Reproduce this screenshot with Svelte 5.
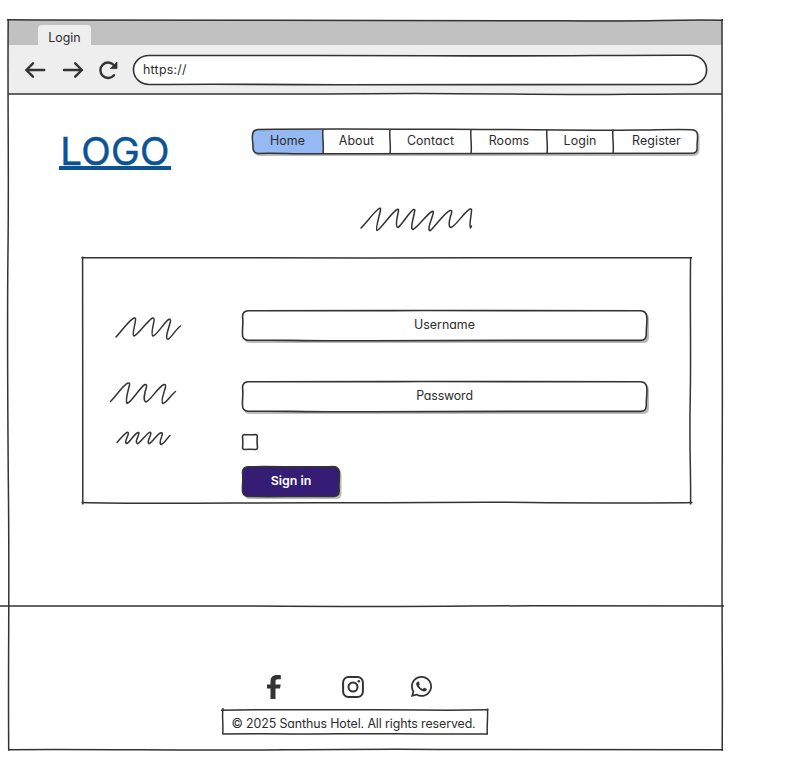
<script>
  const links = [
    { label: 'Home', width: 71, active: true },
    { label: 'About', width: 67 },
    { label: 'Contact', width: 81 },
    { label: 'Rooms', width: 76 },
    { label: 'Login', width: 66 },
    { label: 'Register', width: 87 }
  ];
  const dividers = [323, 390, 471, 547, 613];
</script>

{#snippet field(label)}
  <div class="field stack">
    <svg viewBox="0 0 405 31" width="405" height="31">
      <path class="shadow" d="M8 2.5H401Q407 3 407 9V27Q407 33 401 33H8Q2 33 2 27V9Q2 3 8 2.5Z" />
      <path class="box" d="M6 .7C90 .2 130 1 180 .5S300 1 398.500 .8Q404.500 1 404.800 7C405.300 13 404 19 404.300 25Q404 30.300 398.500 30.400C300 29.800 230 30.700 130 30.800S60 29.800 6 30.300Q.5 30 .5 24.500C.2 18 1.500 12 .5 6.500Q.7 1 6 .7Z" />
    </svg>
    <span>{label}</span>
  </div>
{/snippet}

<div class="page">
  <div class="window">
    <div class="tabs"><div class="tab">Login</div></div>
    <div class="toolbar">
      <svg class="controls" viewBox="17 50 110 40" width="110" height="40">
        <g fill="none" stroke="#333" stroke-width="2.400" stroke-linecap="round" stroke-linejoin="round">
          <path d="M44.200 70H26.300M33 63.300L26.300 70L33 76.700" />
          <path d="M64 70H81.900M75.200 63.300L81.900 70L75.200 76.700" />
          <path d="M114 65.300A7.700 7.700 0 1 0 114 75.200" />
        </g>
        <path fill="#333" stroke="#333" stroke-width=".8" stroke-linejoin="round" d="M117 62V68.600H110.400Z" />
      </svg>
      <div class="address stack">
        <svg viewBox="134 55 573 30" width="573" height="30">
          <path class="box" d="M149 55.500C260 56 330 55 430 55.700S620 55 690 55.200C699 55 706.600 61 706.600 70S699 84.500 691 84.500C570 84 450 85 340 84.800S250 83.800 149 84.500C140 84.300 133.800 78 133.500 70S140 55.700 149 55.500Z" />
        </svg>
        <span>https://</span>
      </div>
    </div>

    <header>
      <div class="logo">LOGO</div>
      <nav class="stack">
        <svg viewBox="252 129 446 25" width="446" height="25">
          <path class="shadow" d="M260 131H694Q699.500 131 699.500 137V150Q699.500 156 693 156H260Q254 156 254 150V137Z" />
          <path fill="#fff" d="M258 129H692Q697.500 129.500 697.500 135V148Q697.500 153.500 692 153.500H258Q252.500 153 252.500 148V135Q252.500 129.500 258 129Z" />
          <path fill="#95b9f2" d="M323 129.500H258Q252.500 130 252.500 135V148Q253 153.500 258 153.500H323Z" />
          <path class="line" d="M258 129.400C330 128.600 390 129.200 450 129.300S610 130.700 640 130.100S675 129.300 692 129.700Q697.300 130.200 697.500 135C697.900 140 696.600 144 697.200 148Q697 153.300 692 153.300C570 154 450 153 360 153.700S300 153 258 153.400Q253.200 153 253 148C253.300 143 251.700 139 252.500 135Q252.700 129.800 258 129.400Z" />
          {#each dividers as x}
            <path class="line" d="M{x} 129.500C{x - 1} 137 {x + 1.2} 145 {x} 153.500" />
          {/each}
        </svg>
        <div class="links">
          {#each links as link}
            <span style="width:{link.width}px" class:active={link.active}>{link.label}</span>
          {/each}
        </div>
      </nav>
    </header>

    <svg class="title" viewBox="360 207 114 25" width="114" height="25">
      <path class="scribble" d="M361 228C367 222 374 212 379 208.500Q381 207.500 380.500 210C379 218 375 229 377 230.500C380 230 392 212 397 209.500Q399 208.500 398.500 211C397 218 395 227 398 227.500C401 226 410 211 413.500 209.500Q415.500 209 414.500 212C413 220 410 229 413 229.500C417 228 427 214 432 211.500Q434 210.500 433 214C431 221 427 230 430 230.800C433 229 445 212 450 210.500Q452.500 210 451.500 213C449 221 448 227 451 227.500C456 226 464 212 470 209Q472 208.500 471.500 211C471 217 469 226 470.500 228L471.500 226" />
    </svg>

    <section class="card">
      <svg class="outline" viewBox="82 257 609 246" width="609" height="246">
        <g class="line">
          <path d="M81.500 257.800C180 257 260 258.500 370 258S550 258.400 692 257.800" />
          <path d="M82.600 256.500C83 340 82 430 82.800 504.500" />
          <path d="M690.600 257C689.800 310 691.200 350 690.200 400S691 470 690.600 504.500" />
          <path d="M81.500 502.500C150 504.300 240 502.500 330 502.700S470 501.800 530 502.500S620 503 692.500 502.600" />
        </g>
      </svg>
      <div class="form">
        <div class="row first">
          <svg viewBox="110 317 76 24" width="76" height="24">
            <path class="scribble" d="M116 337C122 331 129 320 134 318Q136 317.500 135.500 320C135 326 131.500 335 134 336C138 335 147 321 152.500 318Q154.500 317.500 154 321C153 327 150.500 335 153 336C158 334 165 321 169 319.300Q171.500 319 170 323C168.500 329 164.500 339 168 339.300C172 337 176 329 180.500 326" />
          </svg>
          {@render field('Username')}
        </div>
        <div class="row second">
          <svg viewBox="110 381 76 24" width="76" height="24">
            <path class="scribble" d="M110.500 401.500C117 395 123 385 128 383Q130 382.500 129.500 385C128 391 125 401 127 403.500C131 403 140 387 145 384.500Q147 384 146.500 387C144.500 393 143 401 146 402C151 400 158 387 164 384.500Q166 384 165.500 387C164 393 160 402 163 403.500C167 402 171 395 175.500 391.500" />
          </svg>
          {@render field('Password')}
        </div>
        <div class="row third">
          <svg viewBox="110 431 76 16" width="76" height="16">
            <path class="scribble" d="M117 442.500C121 438 124 434 127 432.300Q129 432 128 435C127 438 124 443 127 443.500C130 442 134 434 138 432.500Q139.500 432 138.500 435C137 439 135 443 137.500 443.700C141 442 146 434 149.500 432.300Q151.500 432 150.500 435C149 439 147 443 149 443.700C153 442 157 434 161 432.800Q163 432.500 162 435.500C160.500 440 159 444 161.500 444.500C165 443 167 438 170 435.500" />
          </svg>
          <svg class="check" viewBox="0 0 16 16" width="16" height="16">
            <path class="box" d="M2.500 .5Q8 .9 13.500 .5Q15.300 .6 15.300 2.500Q14.800 8 15.500 13.500Q15.300 15.500 13.500 15.500Q8 15 2.500 15.500Q.7 15.500 .6 13.500Q1 8 .5 2.500Q.6 .7 2.500 .5Z" />
          </svg>
        </div>
        <div class="button stack">
          <svg viewBox="0 0 98 31" width="98" height="31">
            <path class="shadow" d="M8 2.500H94Q99.500 3 99.500 9V27Q99.500 33 94 33H8Q2 33 2 27V9Z" />
            <path class="box solid" d="M6 .8C30 .2 60 1.500 91.500 .6Q97 1 97.300 6.500C97.700 13 96.500 18 97.200 25Q97 30.400 91.500 30.500C60 30 30 31 6 30.400Q.5 30 .5 24.500C.2 18 1.500 12 .5 6.500Q.7 1 6 .8Z" />
          </svg>
          <span>Sign in</span>
        </div>
      </div>
    </section>

    <footer>
      <div class="social">
        <svg class="facebook" viewBox="266 674 16 26" width="16" height="26">
          <path fill="#333" d="M270.500 699V688.500H267V684.500H270.500V681.500C270.500 677 272.800 674.900 277 674.900H280.800V679.200H278C276 679.200 275.500 680 275.500 681.700V684.500H280.700L280 688.500H275.500V699Z" />
        </svg>
        <svg class="instagram" viewBox="342 676 22 22" width="22" height="22">
          <rect x="343.100" y="677.100" width="19.800" height="19.800" rx="5.300" fill="none" stroke="#333" stroke-width="2" />
          <circle cx="353" cy="687" r="4.500" fill="none" stroke="#333" stroke-width="2" />
          <circle cx="358.800" cy="681.300" r="1.300" fill="#333" />
        </svg>
        <svg viewBox="0 0 448 448" width="21" height="21">
          <path fill="#333" d="M380.900 65.100C339 23.100 283.200 0 223.900 0 101.500 0 1.900 99.600 1.900 222c0 39.100 10.200 77.300 29.600 111L0 448l117.700-30.900c32.400 17.700 68.900 27 106.100 27h.1c122.300 0 224.100-99.600 224.100-222 0-59.300-25.200-115-67.100-157zM223.900 406.700c-33.200 0-65.700-8.900-94-25.700l-6.700-4-69.800 18.300L72 327.200l-4.400-7C49.100 290.800 39.400 256.900 39.400 222c0-101.700 82.800-184.500 184.600-184.500 49.300 0 95.600 19.200 130.400 54.100 34.800 34.900 56.200 81.200 56.100 130.500 0 101.800-84.900 184.600-186.600 184.600zm101.200-138.200c-5.500-2.800-32.800-16.200-37.900-18-5.100-1.900-8.800-2.800-12.500 2.800-3.700 5.600-14.300 18-17.600 21.800-3.200 3.700-6.500 4.200-12 1.400-32.600-16.300-54-29.100-75.500-66-5.700-9.800 5.700-9.100 16.300-30.300 1.800-3.700.9-6.900-.5-9.700-1.400-2.800-12.500-30.100-17.100-41.200-4.500-10.800-9.100-9.300-12.500-9.500-3.200-.2-6.900-.2-10.600-.2-3.700 0-9.700 1.400-14.800 6.900-5.100 5.600-19.400 19-19.400 46.300 0 27.300 19.900 53.700 22.600 57.400 2.800 3.700 39.100 59.700 94.800 83.800 35.200 15.200 49 16.500 66.600 13.900 10.700-1.600 32.800-13.400 37.400-26.400 4.600-13 4.600-24.100 3.200-26.400-1.300-2.500-5-3.900-10.500-6.600z" />
        </svg>
      </div>
      <div class="copyright stack">
        <svg viewBox="222 709 266 25" width="266" height="25">
          <g class="line">
            <path d="M221 710.200C280 709 310 710 370 709.800S430 711 488.500 709.800" />
            <path d="M223 708C221.800 716 223.500 724 222.700 734" />
            <path d="M487.500 708.500C488 717 486.800 725 487.300 734.500" />
            <path d="M222.500 734C270 733.500 310 734.200 340 733.800S430 734.400 487.500 733.900" />
          </g>
        </svg>
        <span>© 2025 Santhus Hotel. All rights reserved.</span>
      </div>
    </footer>
  </div>

  <svg class="frame" viewBox="0 0 787 775" width="787" height="775">
    <g class="line">
      <path d="M7 19.800C90 20.500 170 19.500 270 20.300S450 19.700 560 20.700S650 19.600 723 20.200" />
      <path d="M8.200 19C7.500 100 9 170 8 250S7.500 390 8.500 500S8 650 8.700 750.500" />
      <path d="M722 19C722.500 110 721.500 190 722.200 290S721.500 500 722 590S722.500 690 722.200 751" />
      <path d="M8 749.700C90 749 180 750.500 250 750S390 748.700 450 749.500S610 750.500 723 749.800" />
      <path d="M8 94C110 93.500 180 94.300 290 94S410 93 500 94S590 94.800 640 94.200S690 94 722 94" />
      <path d="M0 606C90 606.700 150 605.300 250 606S390 606.800 470 606S590 606.800 724 606" />
    </g>
  </svg>
</div>

<style>
  :global(body) { margin: 0; background: #fff; }
  .page {
    position: relative;
    width: 787px;
    height: 775px;
    overflow: hidden;
    box-sizing: border-box;
    padding: 20px 0 0 8px;
    font: 12.4px/16px Inter, "Noto Sans", sans-serif;
    font-feature-settings: "cv11";
    color: #2b2b2b;
  }
  svg { display: block; overflow: visible; flex: none; }
  .frame { position: absolute; inset: 0; pointer-events: none; }
  .line { fill: none; stroke: #333; stroke-width: 1.500; }
  .box { fill: #fff; stroke: #333; stroke-width: 1.600; }
  .box.solid { fill: #351c75; }
  .shadow { fill: #bbb; }
  .scribble { fill: none; stroke: #333; stroke-width: 1.500; stroke-linecap: round; stroke-linejoin: round; }
  .stack { display: grid; }
  .stack > :global(*) { grid-area: 1 / 1; }
  .window { width: 714px; }
  .tabs { height: 25px; background: #c1c1c1; display: flex; align-items: flex-end; padding-left: 30px; }
  .tab { width: 53px; height: 20px; border-radius: 4px 4px 0 0; background: #eee; text-align: center; line-height: 26px; }
  .toolbar { height: 49px; background: #eee; display: flex; align-items: flex-start; box-sizing: border-box; padding: 5px 0 0 9px; }
  .address { margin: 5px 0 0 7px; width: 573px; height: 30px; align-items: center; }
  .address span { padding-left: 9px; letter-spacing: .25px; }
  header { height: 113px; display: flex; }
  .logo {
    width: 112px;
    height: 33px;
    margin: 39px 81px 0 51px;
    border-bottom: 4px solid #0b5394;
    color: #0b5394;
    text-align: center;
    font-size: 38.5px;
    font-weight: 400;
    -webkit-text-stroke: .5px #0b5394;
    line-height: 37px;
    letter-spacing: .3px;
  }
  nav { margin-top: 35px; width: 446px; height: 25px; }
  .links { display: flex; line-height: 24px; text-align: center; letter-spacing: .1px; }
  .title { margin-left: 352px; }
  .card { display: grid; margin: 25px 0 0 74px; width: 609px; height: 246px; }
  .card > * { grid-area: 1 / 1; }
  .form { padding: 53px 0 0 28px; }
  .row { display: flex; align-items: flex-start; }
  .row > svg:first-child { margin-right: 56px; }
  .first { height: 71px; }
  .first > svg:first-child { margin-top: 7px; }
  .second { height: 50px; }
  .third { height: 35px; }
  .check { margin-top: 3px; }
  .field { width: 405px; height: 31px; text-align: center; line-height: 29px; }
  .second .field { letter-spacing: -.15px; }
  .button { margin-left: 132px; width: 98px; height: 31px; text-align: center; line-height: 29px; color: #fff; font-weight: 600; }
  footer { padding-top: 171px; }
  .social { height: 35px; display: flex; align-items: flex-start; padding-left: 258px; }
  .instagram { margin: 2px 47px 0 60px; }
  .social svg:last-child { margin-top: 2px; }
  .copyright { margin-left: 214px; width: 266px; height: 25px; line-height: 29px; text-align: center; white-space: nowrap; letter-spacing: -.1px; }
  .copyright span { padding-right: 3px; }
</style>
